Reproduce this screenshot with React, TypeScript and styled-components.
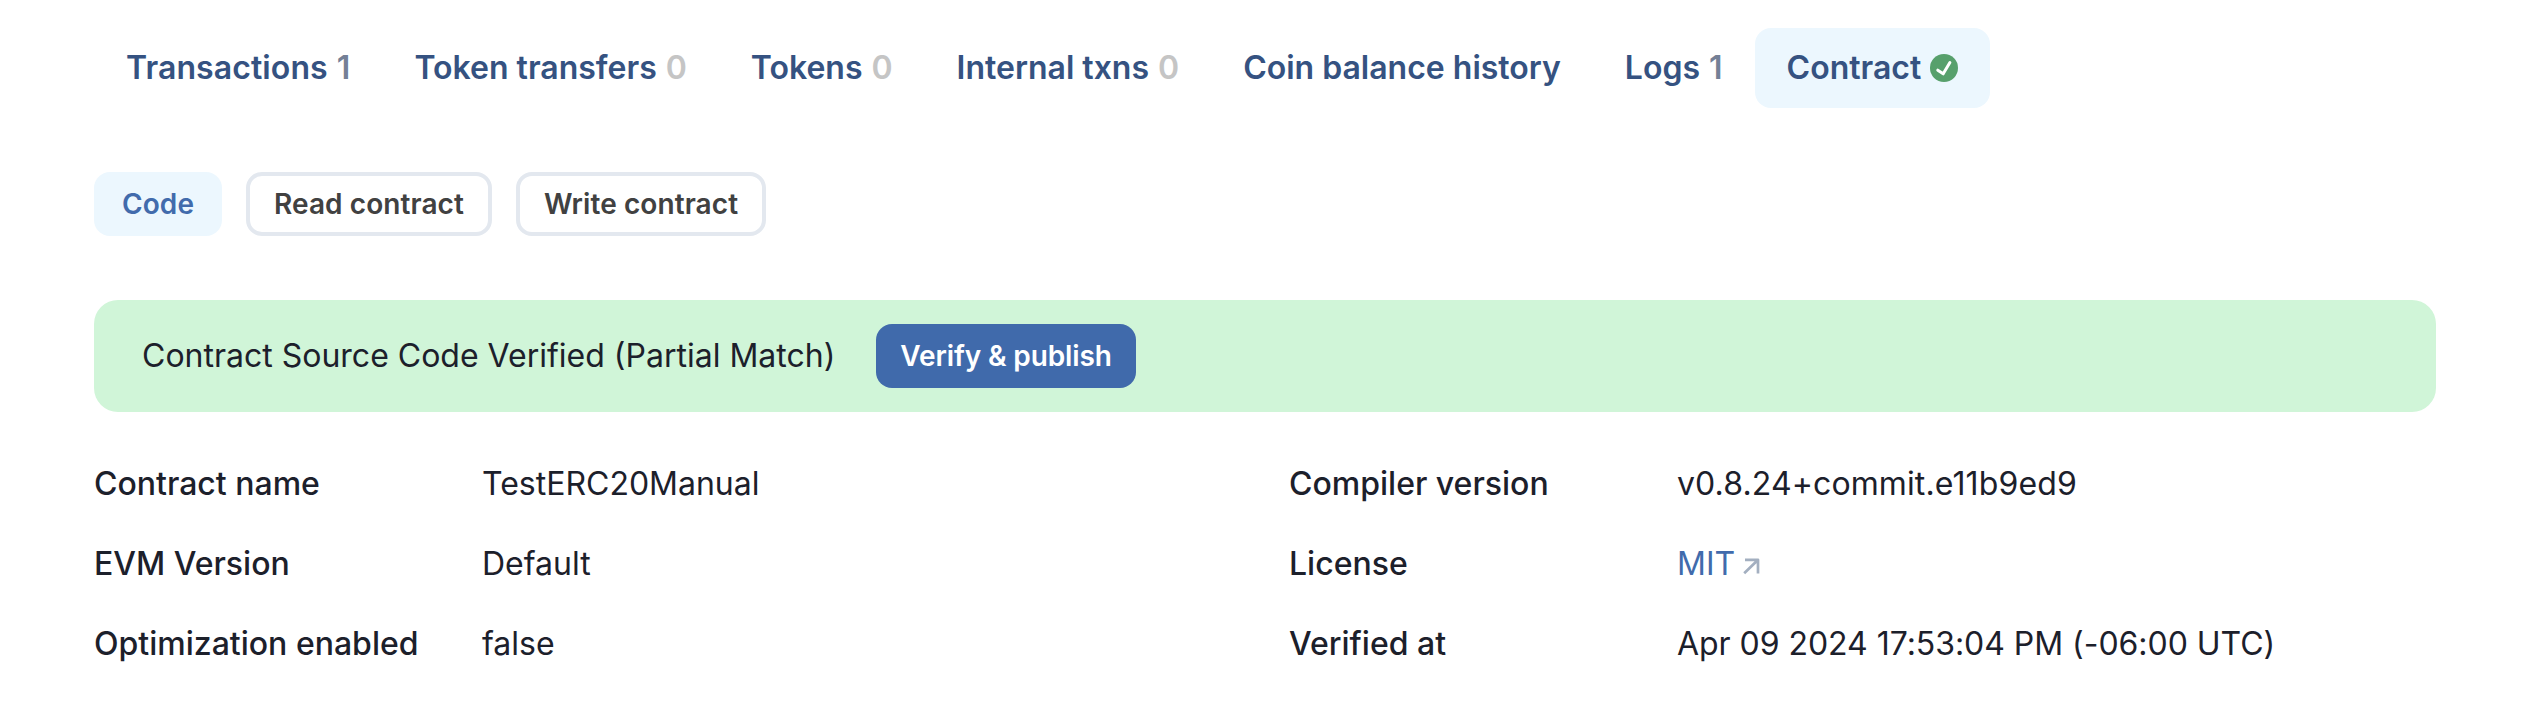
import React from "react";
import styled, { createGlobalStyle } from "styled-components";

const GlobalStyle = createGlobalStyle`
  *, *::before, *::after { box-sizing: border-box; }
  body {
    margin: 0;
    background: #ffffff;
    color: #1c202b;
    font-family: Inter, "Liberation Sans", sans-serif;
    font-size: 32px;
    line-height: 48px;
  }
  button { font: inherit; cursor: pointer; }
`;

const Page = styled.main`
  padding: 28px 90px 0 94px;
`;

const TabList = styled.nav`
  display: flex;
`;

const Tab = styled.button<{ $active?: boolean; $tracking?: number }>`
  display: flex;
  align-items: center;
  height: 80px;
  padding: 0 32px;
  border: 0;
  border-radius: 16px;
  background: ${(p) => (p.$active ? "#ecf7fe" : "transparent")};
  color: #355281;
  font-weight: 600;
  letter-spacing: ${(p) => p.$tracking ?? 0}px;
  white-space: pre;
`;

const Count = styled.span<{ $empty: boolean }>`
  color: ${(p) => (p.$empty ? "#c5c5c5" : "#748096")};
  margin-left: 9px;
`;

const CheckIcon = styled.svg`
  width: 28px;
  height: 28px;
  margin-left: 9px;
`;

const SubTabList = styled.div`
  display: flex;
  gap: 24px;
  margin-top: 64px;
`;

const SubTab = styled.button<{ $active?: boolean }>`
  height: 64px;
  padding: 0 24px;
  border: 4px solid ${(p) => (p.$active ? "#ecf7fe" : "#e3e8ef")};
  border-radius: 16px;
  background: ${(p) => (p.$active ? "#ecf7fe" : "transparent")};
  color: ${(p) => (p.$active ? "#416bac" : "#414141")};
  font-size: 28px;
  line-height: 34px;
  font-weight: 600;
  letter-spacing: 0.08px;
`;

const Banner = styled.section`
  display: flex;
  align-items: center;
  gap: 41px;
  height: 112px;
  margin-top: 64px;
  padding: 0 48px;
  border-radius: 24px;
  background: #d0f5d8;
`;

const PrimaryButton = styled.button`
  height: 64px;
  padding: 0 24px;
  border: 0;
  border-radius: 16px;
  background: #406aab;
  color: #ffffff;
  font-size: 28px;
  line-height: 34px;
  font-weight: 600;
  letter-spacing: -0.12px;
`;

const Details = styled.dl`
  display: grid;
  grid-template-columns: 1fr 1fr;
  gap: 32px 48px;
  margin: 48px 0 0;
`;

const Detail = styled.div`
  display: flex;
`;

const Label = styled.dt`
  width: 388px;
  font-weight: 500;
`;

const Value = styled.dd<{ $tracking?: number }>`
  margin: 0;
  letter-spacing: ${(p) => p.$tracking ?? 0}px;
`;

const ExternalLink = styled.a`
  display: flex;
  align-items: center;
  color: #416bac;
  text-decoration: none;
`;

const ArrowIcon = styled.svg`
  width: 20px;
  height: 20px;
  margin: 3px 0 0 5px;
`;

const tabs: { label: string; count?: number; verified?: boolean; tracking?: number }[] = [
  { label: "Transactions", count: 1, tracking: 0.1 },
  { label: "Token transfers", count: 0 },
  { label: "Tokens", count: 0 },
  { label: "Internal txns", count: 0 },
  { label: "Coin balance history" },
  { label: "Logs", count: 1 },
  { label: "Contract", verified: true },
];

const details: { label: string; value: string; link?: boolean; tracking?: number }[] = [
  { label: "Contract name", value: "TestERC20Manual" },
  { label: "Compiler version", value: "v0.8.24+commit.e11b9ed9", tracking: 0.12 },
  { label: "EVM Version", value: "Default" },
  { label: "License", value: "MIT", link: true },
  { label: "Optimization enabled", value: "false" },
  { label: "Verified at", value: "Apr 09 2024 17:53:04 PM (-06:00 UTC)", tracking: -0.04 },
];

export default function App() {
  return (
    <Page>
      <GlobalStyle />
      <TabList>
        {tabs.map((tab) => (
          <Tab key={tab.label} $active={tab.verified} $tracking={tab.tracking}>
            {tab.label}
            {tab.count !== undefined && <Count $empty={tab.count === 0}>{tab.count}</Count>}
            {tab.verified && (
              <CheckIcon viewBox="0 0 28 28" fill="none">
                <circle cx="14" cy="14" r="14" fill="#57a06c" />
                <path d="M7.8 16.2 13.2 19.8 19.9 8.5" stroke="#fff" strokeWidth="3" strokeLinecap="round" strokeLinejoin="round" />
              </CheckIcon>
            )}
          </Tab>
        ))}
      </TabList>
      <SubTabList>
        <SubTab $active>Code</SubTab>
        <SubTab>Read contract</SubTab>
        <SubTab>Write contract</SubTab>
      </SubTabList>
      <Banner>
        <span>Contract Source Code Verified (Partial Match)</span>
        <PrimaryButton>Verify &amp; publish</PrimaryButton>
      </Banner>
      <Details>
        {details.map((item) => (
          <Detail key={item.label}>
            <Label>{item.label}</Label>
            <Value $tracking={item.tracking}>
              {item.link ? (
                <ExternalLink href="#">
                  {item.value}
                  <ArrowIcon viewBox="0 0 20 20" fill="none" stroke="#a3afc0" strokeWidth="2.7">
                    <path d="M5 3.8H18V17.6M17.6 4.2 4.2 17.2" strokeLinejoin="round" />
                  </ArrowIcon>
                </ExternalLink>
              ) : (
                item.value
              )}
            </Value>
          </Detail>
        ))}
      </Details>
    </Page>
  );
}
